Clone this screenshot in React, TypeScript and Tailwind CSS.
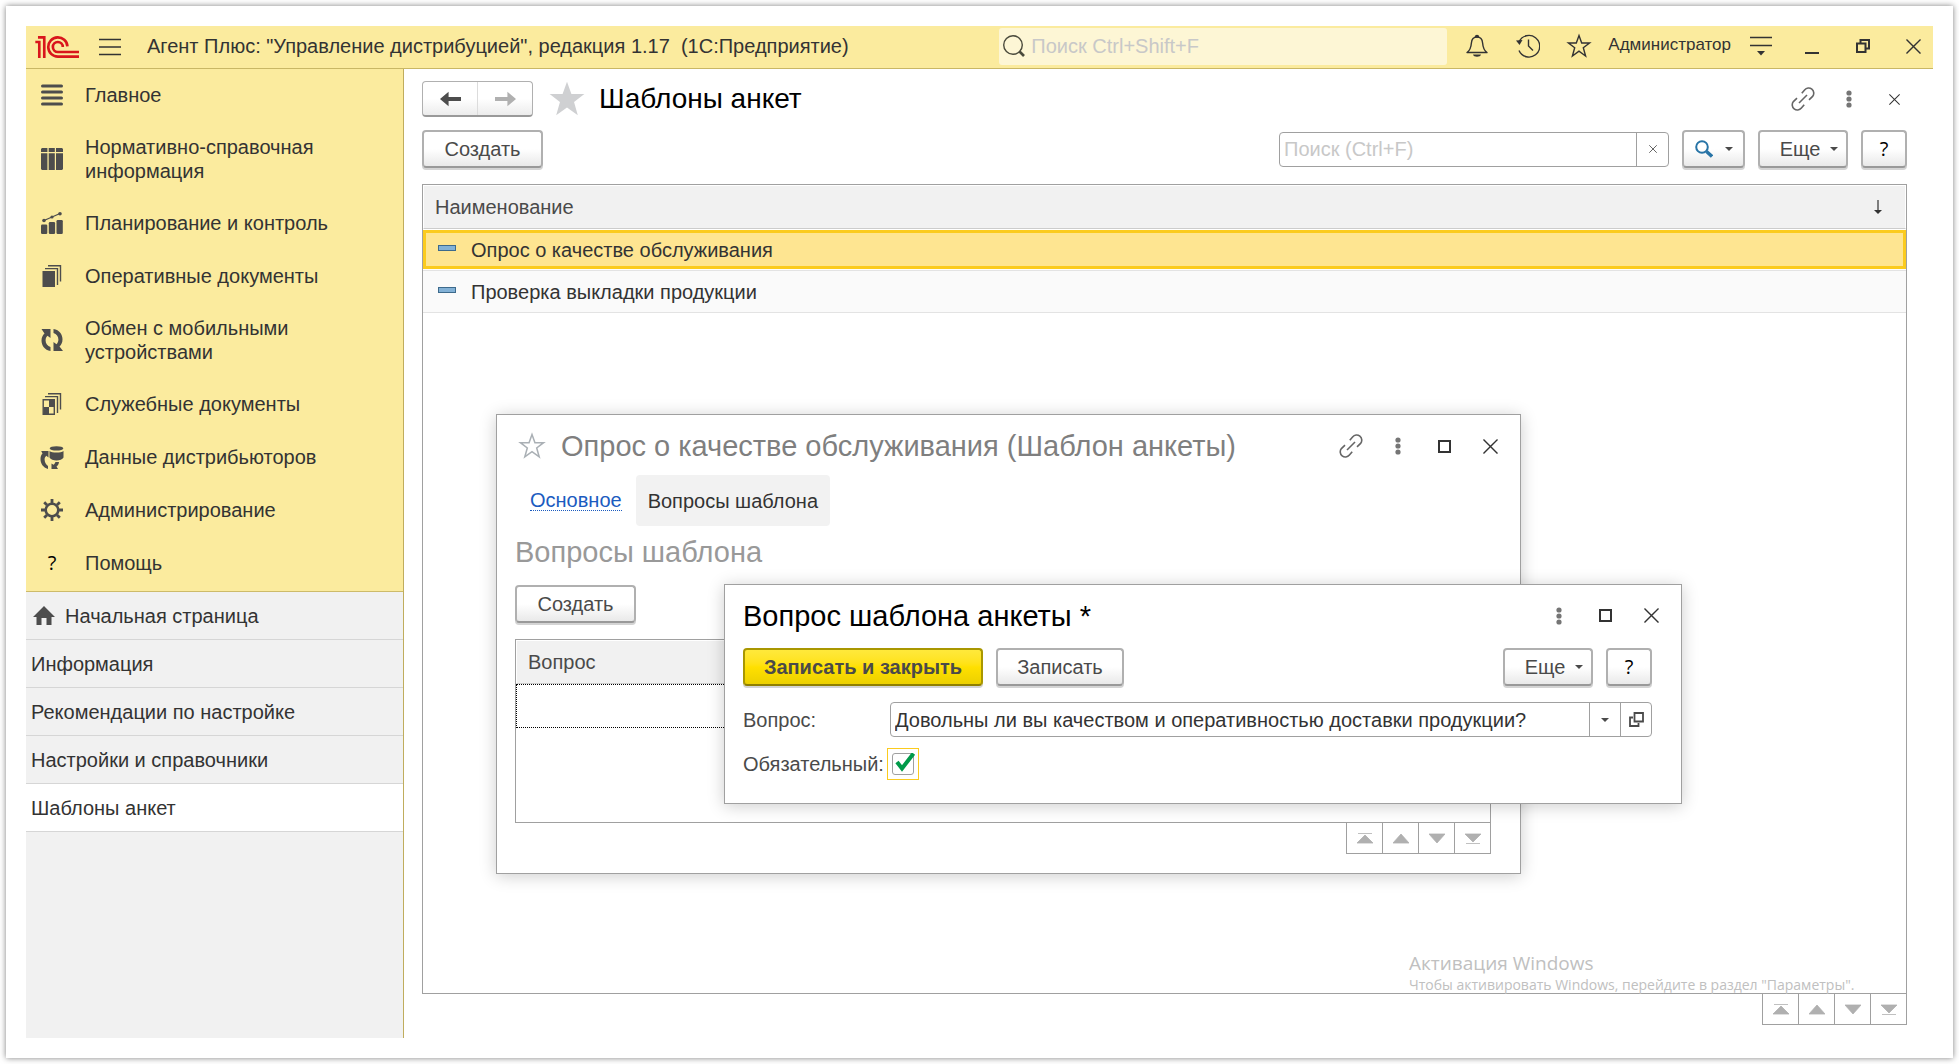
import React, { useState } from "react";
import clsx from "clsx";

interface IconT {
  className?: string;
}

/* ---------- icons ---------- */

const Logo1C = () => (
  <svg
    viewBox="0 0 133 66"
    className="h-[22px] w-11 shrink-0"
    fill="none"
    stroke="#d9161c"
    strokeWidth="8"
    aria-label="1C"
  >
    <path d="M1 18H13V66M9 4H28V66" />
    <path d="M98 31A29 29 0 1 0 69 62H133" />
    <path d="M84 33A15 15 0 1 0 69 48H133" />
  </svg>
);

const BurgerIcon = () => (
  <svg viewBox="0 0 22 18" className="h-[18px] w-[22px]" stroke="#333" strokeWidth="1.4">
    <path d="M0 1.5H22M0 9H22M0 16.5H22" />
  </svg>
);

const LoupeIcon = () => (
  <svg viewBox="0 0 22 22" className="h-[22px] w-[22px] shrink-0" fill="none" stroke="#4a4a3c">
    <circle cx="10" cy="10" r="9.3" strokeWidth="1.4" />
    <path d="M16.5 16.5L21 21" strokeWidth="2.6" />
  </svg>
);

const BellIcon = () => (
  <svg viewBox="0 0 22 24" className="h-6 w-[22px]" fill="none" stroke="#333" strokeWidth="1.4">
    <path
      d="M1 18.5C4 16.5 5 14 5.4 9C5.7 5 8 3 11 3C14 3 16.3 5 16.6 9C17 14 18 16.5 21 18.5Z"
      strokeLinejoin="round"
    />
    <path d="M9.5 3C9.5 1 12.5 1 12.5 3Z" fill="#333" />
    <path d="M7 20.5H15C14.5 23.5 7.5 23.5 7 20.5Z" fill="#333" stroke="none" />
  </svg>
);

const HistoryIcon = () => (
  <svg viewBox="0 0 24 24" className="h-6 w-6" fill="none" stroke="#333" strokeWidth="1.4">
    <path d="M3 8A10.8 10.8 0 1 1 3 16.5" />
    <path d="M12.5 5.5V12L17 16.5" />
    <path d="M0 6.5L6.5 6L3.5 11Z" fill="#333" stroke="none" />
  </svg>
);

const StarIcon: React.FC<IconT> = ({ className }) => (
  <svg viewBox="1 1 22 22" className={clsx("overflow-visible", className)} strokeWidth="1.4">
    <path d="M12 1.5L14.7 9H22.6L16.3 13.8L18.6 22L12 17.2L5.4 22L7.7 13.8L1.4 9H9.3Z" />
  </svg>
);

const MenuDownIcon = () => (
  <svg viewBox="0 0 22 20" className="h-5 w-[22px]" stroke="#333" strokeWidth="1.4">
    <path d="M0 1.5H22M0 9.5H22" />
    <path d="M7 15H15L11 19.5Z" fill="#333" stroke="none" />
  </svg>
);

const CloseIcon: React.FC<IconT> = ({ className }) => (
  <svg viewBox="0 0 16 16" className={className} stroke="#333" strokeWidth="1.5">
    <path d="M.5 .5L15.5 15.5M15.5 .5L.5 15.5" />
  </svg>
);

const RestoreIcon = () => (
  <svg viewBox="0 0 14 14" className="h-3.5 w-3.5" fill="none" stroke="#333" strokeWidth="2">
    <path d="M1 4.5H9.5V13H1ZM4.5 4.5V1H13V9.5H9.5" />
  </svg>
);

const SquareIcon = () => (
  <svg viewBox="0 0 13 13" className="h-[13px] w-[13px]" fill="none" stroke="#333" strokeWidth="2">
    <path d="M1 1H12V12H1Z" />
  </svg>
);

const LinkIcon = () => (
  <svg viewBox="0 0 24 24" className="h-6 w-6" fill="none" stroke="#666" strokeWidth="1.6">
    <path d="M10.8 6.2L13.6 2.9A5 5 0 0 1 21.6 9.4L18 12.8" />
    <path d="M13.2 17.8L10.4 21.1A5 5 0 0 1 2.4 14.6L6 11.2" />
    <path d="M8 16L16 8" />
  </svg>
);

const DotsIcon = () => (
  <svg viewBox="0 0 6 18" className="h-[18px] w-1.5" fill="#757575">
    <circle cx="3" cy="3" r="2.6" />
    <circle cx="3" cy="9" r="2.6" />
    <circle cx="3" cy="15" r="2.6" />
  </svg>
);

const Caret = () => (
  <svg viewBox="0 0 8 4" className="h-1 w-2" fill="#4a4a4a">
    <path d="M0 0H8L4 4Z" />
  </svg>
);

const BlueLoupe = () => (
  <svg viewBox="0 0 18 18" className="h-[18px] w-[18px]" fill="none" stroke="#2874a6">
    <circle cx="7" cy="7" r="5.8" strokeWidth="2" />
    <path d="M11.5 11.5L17 16.5" strokeWidth="3.4" />
  </svg>
);

const ArrowIcon: React.FC<IconT> = ({ className }) => (
  <svg viewBox="0 0 22 16" className={className}>
    <path d="M0 8L9 .5V6H22V10H9V15.5Z" />
  </svg>
);

const HomeIcon = () => (
  <svg viewBox="0 0 22 19" className="h-[19px] w-[22px]" fill="#4d4d4d">
    <path d="M11 0L22 11H18.5V19H13.5V12H8.5V19H3.5V11H0Z" />
  </svg>
);

const OpenIcon = () => (
  <svg viewBox="0 0 15 15" className="h-[15px] w-[15px]" fill="none" stroke="#4a4a4a" strokeWidth="1.8">
    <path d="M5.5 1H14V9.5H5.5Z" />
    <path d="M4 5.5H1V14H9.5V11" />
  </svg>
);

const ListIcon = () => (
  <svg viewBox="0 0 22 22" className="h-[22px] w-[22px]" stroke="#4d4d4d" strokeWidth="3" strokeLinecap="round">
    <path d="M1.5 2H20.5M1.5 8H20.5M1.5 14H20.5M1.5 20H20.5" />
  </svg>
);

const BindersIcon = () => (
  <svg viewBox="0 0 22 22" className="h-[22px] w-[22px]" fill="#4d4d4d">
    <path d="M1 0H6.4V4H0V1ZM7.7 0H13.8V4H7.7ZM15 0H21L22 1V4H15Z" />
    <path d="M0 5.3H6.4V22H1L0 21ZM7.7 5.3H13.8V22H7.7ZM15 5.3H22V21L21 22H15Z" />
  </svg>
);

const ChartIcon = () => (
  <svg viewBox="0 0 22 22" className="h-[22px] w-[22px]" fill="#4d4d4d">
    <rect x="0" y="12.5" width="6.3" height="9.5" rx="1.2" />
    <rect x="7.8" y="10" width="6.3" height="12" rx="1.2" />
    <rect x="15.5" y="8" width="6.3" height="14" rx="1.2" />
    <path d="M3 8.5L11 5L19 1.5" stroke="#4d4d4d" strokeWidth="1.3" />
    <circle cx="3" cy="8.5" r="1.8" />
    <circle cx="11" cy="5" r="1.6" />
    <circle cx="19" cy="1.8" r="1.8" />
  </svg>
);

const DocsIcon = () => (
  <svg viewBox="0 0 22 22" className="h-[22px] w-[22px]" fill="#4d4d4d">
    <rect x="1.5" y="6" width="12.5" height="16" />
    <path d="M4 3.6H16.5V20M7 .8H19.5V16.5" fill="none" stroke="#4d4d4d" strokeWidth="1.4" />
  </svg>
);

const SyncIcon = () => (
  <svg viewBox="0 0 22 22" className="h-[22px] w-[22px]" fill="#4d4d4d">
    <path d="M9.5 22C3.5 21 .5 16.5 .5 11.5C.5 8.5 1.8 6 3.5 4.5L.5 0H9.5V9L6.5 6.8C5.2 8 4.6 9.6 4.6 11.5C4.6 14.5 6.5 17 9.5 18Z" />
    <path d="M12.5 0C18.5 1 21.5 5.5 21.5 10.5C21.5 13.5 20.2 16 18.5 17.5L22 22H12.5V13L15.5 15.2C16.8 14 17.4 12.4 17.4 10.5C17.4 7.5 15.5 5 12.5 4Z" />
  </svg>
);

const ServiceDocsIcon = () => (
  <svg viewBox="0 0 22 22" className="h-[22px] w-[22px]" fill="none" stroke="#4d4d4d" strokeWidth="1.4">
    <path d="M2.2 6.7H13.3V21.3H2.2Z" />
    <path d="M8 7H13V14H8ZM2.5 14H8V21H2.5Z" fill="#4d4d4d" stroke="none" />
    <path d="M4 3.6H16.5V20M7 .8H19.5V16.5" />
  </svg>
);

const DataIcon = () => (
  <svg viewBox="0 0 24 23" className="h-[23px] w-6 shrink-0" fill="#4d4d4d">
    <path d="M8 23C3 21.5 .5 17.5 .5 13C.5 10.5 1.3 8.7 2.5 7.5L1.2 5H8.5V11.5L6.3 9.8C5 11 4.6 12 4.6 13.5C4.6 16.5 6 18.5 8 20Z" />
    <ellipse cx="16.5" cy="2.4" rx="6.8" ry="2.2" />
    <path d="M9.5 5C12 7 21 7 23.5 5V11.5C21.5 15.5 11.5 15.5 9.5 11.5Z" />
    <path d="M15.5 16H19C18.8 18 17.8 19.6 16.5 20.5L18 23H11.5V17.5L13.5 18.8C14.5 18 15 17.2 15.5 16Z" />
  </svg>
);

const GearIcon = () => (
  <svg viewBox="0 0 22 22" className="h-[22px] w-[22px]" fill="none" stroke="#4d4d4d">
    <circle cx="11" cy="11" r="6.3" strokeWidth="2.6" />
    <path
      d="M11 0V4M11 18V22M0 11H4M18 11H22M3.2 3.2L6 6M16 16L18.8 18.8M18.8 3.2L16 6M6 16L3.2 18.8"
      strokeWidth="2.8"
    />
  </svg>
);

const HelpIcon = () => (
  <span className="font-['Open_Sans',sans-serif] text-xl leading-6 font-medium text-black">?</span>
);

/* ---------- data ---------- */

const sections = [
  { title: "Главное", Icon: ListIcon },
  { title: "Нормативно-справочная информация", Icon: BindersIcon },
  { title: "Планирование и контроль", Icon: ChartIcon },
  { title: "Оперативные документы", Icon: DocsIcon },
  { title: "Обмен с мобильными устройствами", Icon: SyncIcon },
  { title: "Служебные документы", Icon: ServiceDocsIcon },
  { title: "Данные дистрибьюторов", Icon: DataIcon },
  { title: "Администрирование", Icon: GearIcon },
  { title: "Помощь", Icon: HelpIcon },
];

const openPages = [
  "Начальная страница",
  "Информация",
  "Рекомендации по настройке",
  "Настройки и справочники",
  "Шаблоны анкет",
];

const templates = ["Опрос о качестве обслуживания", "Проверка выкладки продукции"];

/* ---------- shared controls ---------- */

interface ButtonT extends React.ButtonHTMLAttributes<HTMLButtonElement> {
  primary?: boolean;
}

const Button: React.FC<ButtonT> = ({ primary, className, ...props }) => (
  <button
    type="button"
    className={clsx(
      "flex h-[38px] shrink-0 items-center justify-center rounded-[4px] border-2 bg-linear-to-b leading-6 whitespace-nowrap text-[#4a4a4a] shadow-[0_2px_0_#d4d4d4]",
      primary
        ? "border-[#a99700] border-b-[#8f7f00] from-[#ffe93b] via-[#ffe000] to-[#ecd000] font-bold"
        : "border-[#b0b0b0] border-b-[#999] from-white from-50% to-[#e9e9e9]",
      className
    )}
    {...props}
  />
);

const MoreButton = () => (
  <Button className="w-[90px] gap-2.5 pl-3">
    Еще
    <Caret />
  </Button>
);

const HelpButton = () => (
  <Button className="w-[46px]" aria-label="Справка">
    <HelpIcon />
  </Button>
);

const IconButton: React.FC<React.ButtonHTMLAttributes<HTMLButtonElement>> = ({
  className,
  ...props
}) => (
  <button
    type="button"
    className={clsx("flex shrink-0 items-center justify-center", className)}
    {...props}
  />
);

const pagerShapes = [
  { label: "В начало", d: "M8 2L16 10H0ZM1 .5H15" },
  { label: "Вверх", d: "M8 1L16 10H0Z" },
  { label: "Вниз", d: "M0 1H16L8 10Z" },
  { label: "В конец", d: "M0 1H16L8 9ZM1 10.5H15" },
];

const Pager = () => (
  <div className="-mt-px flex self-end border-l border-[#a0a0a0]">
    {pagerShapes.map(({ label, d }) => (
      <button
        key={label}
        type="button"
        aria-label={label}
        className="flex h-8 w-9 items-center justify-center border-y border-r border-[#a0a0a0]"
      >
        <svg viewBox="0 0 16 11" className="h-[11px] w-4" fill="#b0b0b0" stroke="#b0b0b0" strokeWidth=".8">
          <path d={d} />
        </svg>
      </button>
    ))}
  </div>
);

/* ---------- page parts ---------- */

const TopBar = () => (
  <header className="flex h-[43px] items-center border-b border-[#c9b765] bg-[#fbeb9e] pl-[9px]">
    <Logo1C />
    <IconButton aria-label="Меню" className="ml-5">
      <BurgerIcon />
    </IconButton>
    <div className="ml-[26px] min-w-0 flex-1 truncate pb-0.5 whitespace-pre">
      {'Агент Плюс: "Управление дистрибуцией", редакция 1.17  (1С:Предприятие)'}
    </div>
    <label className="mb-0.5 flex h-[37px] w-[448px] items-center gap-1.5 rounded-[3px] bg-[#fdf6d5] px-1">
      <LoupeIcon />
      <input
        aria-label="Поиск"
        placeholder="Поиск Ctrl+Shift+F"
        className="min-w-0 flex-1 bg-transparent outline-none placeholder:text-[#c8c8c8]"
      />
    </label>
    <div className="ml-1 flex items-center pb-0.5">
      <IconButton aria-label="Уведомления" className="w-[51px]">
        <BellIcon />
      </IconButton>
      <IconButton aria-label="История" className="w-[51px]">
        <HistoryIcon />
      </IconButton>
      <IconButton aria-label="Избранное" className="w-[51px]">
        <StarIcon className="h-[22px] w-[22px] fill-none stroke-[#333]" />
      </IconButton>
      <button type="button" className="px-1 pb-0.5 text-[17px] leading-6">
        Администратор
      </button>
      <IconButton aria-label="Настройки" className="w-[51px]">
        <MenuDownIcon />
      </IconButton>
      <IconButton aria-label="Свернуть" className="h-6 w-[51px] items-end pb-1">
        <span className="h-0.5 w-3.5 bg-[#333]" />
      </IconButton>
      <IconButton aria-label="Восстановить" className="w-[51px]">
        <RestoreIcon />
      </IconButton>
      <IconButton aria-label="Закрыть" className="w-[45px] justify-end pr-3">
        <CloseIcon className="h-[15px] w-[15px]" />
      </IconButton>
    </div>
  </header>
);

const Sidebar = () => (
  <aside className="flex w-[378px] shrink-0 flex-col border-r border-[#c0ad5d] bg-[#f1f1f1]">
    <nav className="border-b border-[#cdbb6a] bg-[#fbeb9e] pb-px">
      {sections.map(({ title, Icon }) => (
        <a
          key={title}
          href="#"
          className="flex min-h-[53px] items-center gap-[22px] pt-[13px] pr-16 pb-3.5 pl-[15px] leading-6"
        >
          <span className="flex w-[22px] shrink-0 justify-center">
            <Icon />
          </span>
          {title}
        </a>
      ))}
    </nav>
    <nav>
      {openPages.map((page, i) => (
        <a
          key={page}
          href="#"
          className={clsx(
            "flex h-12 items-center gap-2.5 border-b border-[#d6d6d6]",
            i === 0 ? "pl-[7px]" : "pl-[5px]",
            i === openPages.length - 1 && "bg-white"
          )}
        >
          {i === 0 && <HomeIcon />}
          {page}
        </a>
      ))}
    </nav>
  </aside>
);

const TemplateList = () => (
  <>
    <div className="flex items-center pt-3 pr-4">
      <div className="flex h-9 w-[111px] overflow-hidden rounded-[4px] border border-[#b0b0b0] border-b-2 border-b-[#999] bg-linear-to-b from-white from-50% to-[#ececec]">
        <IconButton aria-label="Назад" className="flex-1 border-r border-[#dcdcdc]">
          <ArrowIcon className="h-4 w-[21px] fill-[#4d4d4d]" />
        </IconButton>
        <IconButton aria-label="Вперед" className="flex-1">
          <ArrowIcon className="h-4 w-[21px] rotate-180 fill-[#b0b0b0]" />
        </IconButton>
      </div>
      <IconButton aria-label="В избранное" className="ml-4">
        <StarIcon className="h-9 w-9 fill-[#cfd0d2]" />
      </IconButton>
      <h1 className="ml-3.5 flex-1 text-[28px] leading-9 text-black">Шаблоны анкет</h1>
      <IconButton aria-label="Ссылка" className="w-12">
        <LinkIcon />
      </IconButton>
      <IconButton aria-label="Ещё действия" className="w-11">
        <DotsIcon />
      </IconButton>
      <IconButton aria-label="Закрыть" className="w-[46px]">
        <CloseIcon className="h-[11px] w-[11px]" />
      </IconButton>
    </div>

    <div className="mt-[13px] mr-[26px] flex items-center gap-[13px]">
      <Button className="mr-auto w-[121px]">Создать</Button>
      <div className="flex h-[35px] w-[390px] rounded-[4px] border border-[#a0a0a0]">
        <input
          aria-label="Поиск по списку"
          placeholder="Поиск (Ctrl+F)"
          className="min-w-0 flex-1 bg-transparent px-1 outline-none placeholder:text-[#c8c8c8]"
        />
        <IconButton aria-label="Очистить" className="w-8 border-l border-[#a0a0a0]">
          <CloseIcon className="h-2 w-2" />
        </IconButton>
      </div>
      <Button className="w-[63px] gap-3" aria-label="Найти">
        <BlueLoupe />
        <Caret />
      </Button>
      <MoreButton />
      <HelpButton />
    </div>

    <div className="mt-4 mr-[26px] mb-[13px] flex flex-1 flex-col">
      <div className="flex-1 border border-[#a0a0a0]">
        <table className="w-full border-separate border-spacing-0 text-left">
          <thead>
            <tr>
              <th className="h-11 border border-white border-b-[#ccc] bg-[#f1f1f1] bg-clip-padding px-[11px] font-normal text-[#4a4a4a]">
                <div className="flex items-center justify-between pr-3">
                  Наименование
                  <svg viewBox="0 0 8 14" className="h-3.5 w-2" fill="#333">
                    <path d="M3.4 0H4.6V10H8L4 14L0 10H3.4Z" />
                  </svg>
                </div>
              </th>
            </tr>
          </thead>
          <tbody>
            {templates.map((name, i) => (
              <tr key={name}>
                <td
                  className={clsx(
                    "h-[42px] border-b border-[#e3e3e3] p-0",
                    i > 0 && "bg-[#fafafa]"
                  )}
                >
                  <div
                    className={clsx(
                      "flex h-[39px] items-center gap-[15px] border-3 px-3",
                      i === 0 ? "border-[#fbcb1e] bg-[#fee591]" : "border-transparent"
                    )}
                  >
                    <span className="mb-1 h-1.5 w-[18px] border border-[#3d6a8c] bg-[#82b1d6]" />
                    {name}
                  </div>
                </td>
              </tr>
            ))}
          </tbody>
        </table>
      </div>
      <Pager />
    </div>
  </>
);

const windowClass =
  "absolute flex flex-col border border-[#a0a0a0] bg-white shadow-[0_2px_16px_rgba(0,0,0,0.2)]";

const TemplateWindow = () => (
  <section className={clsx(windowClass, "top-[345px] left-[92px] h-[460px] w-[1025px] pl-[18px]")}>
    <div className="flex h-[60px] items-center pt-0.5">
      <IconButton aria-label="В избранное" className="ml-[5px]">
        <StarIcon className="h-6 w-6 fill-none stroke-[#aab0b5]" />
      </IconButton>
      <h2 className="ml-[17px] flex-1 text-[29px] leading-9 text-[#7f7f7f]">
        Опрос о качестве обслуживания (Шаблон анкеты)
      </h2>
      <IconButton aria-label="Ссылка" className="w-12">
        <LinkIcon />
      </IconButton>
      <IconButton aria-label="Ещё действия" className="w-[46px]">
        <DotsIcon />
      </IconButton>
      <IconButton aria-label="Развернуть" className="w-[46px]">
        <SquareIcon />
      </IconButton>
      <IconButton aria-label="Закрыть" className="mr-[7px] w-[46px]">
        <CloseIcon className="h-[15px] w-[15px]" />
      </IconButton>
    </div>
    <nav className="flex items-center gap-3.5 pl-[15px]">
      <a href="#" className="border-b border-dotted border-[#1b5bbf] leading-5 text-[#1b5bbf]">
        Основное
      </a>
      <a href="#" className="flex h-[51px] items-center rounded-[4px] bg-[#f2f2f2] px-3">
        Вопросы шаблона
      </a>
    </nav>
    <h3 className="mt-2 text-[29px] leading-9 text-[#999]">Вопросы шаблона</h3>
    <Button className="mt-[15px] w-[121px]">Создать</Button>
    <div className="mt-4 mr-[29px] flex flex-col">
      <div className="h-[184px] border border-[#a0a0a0]">
        <table className="w-full border-separate border-spacing-0 text-left">
          <thead>
            <tr>
              <th className="h-11 border border-white border-b-[#ccc] bg-[#f1f1f1] bg-clip-padding px-[11px] font-normal text-[#4a4a4a]">
                Вопрос
              </th>
            </tr>
          </thead>
          <tbody>
            <tr>
              <td className="h-11 border border-dotted border-black" />
            </tr>
          </tbody>
        </table>
      </div>
      <Pager />
    </div>
  </section>
);

const QuestionWindow = () => {
  const [question, setQuestion] = useState(
    "Довольны ли вы качеством и оперативностью доставки продукции?"
  );
  const [required, setRequired] = useState(true);

  return (
    <section className={clsx(windowClass, "top-[515px] left-[320px] h-[220px] w-[958px] pl-[18px]")}>
      <div className="flex h-[63px] items-center pb-0.5">
        <h2 className="flex-1 text-[29px] leading-9 text-black">Вопрос шаблона анкеты *</h2>
        <IconButton aria-label="Ещё действия" className="w-[46px]">
          <DotsIcon />
        </IconButton>
        <IconButton aria-label="Развернуть" className="w-[46px]">
          <SquareIcon />
        </IconButton>
        <IconButton aria-label="Закрыть" className="mr-[7px] w-[46px]">
          <CloseIcon className="h-[15px] w-[15px]" />
        </IconButton>
      </div>
      <div className="mr-[29px] flex gap-[13px]">
        <Button primary className="w-60">
          Записать и закрыть
        </Button>
        <Button className="mr-auto w-32">Записать</Button>
        <MoreButton />
        <HelpButton />
      </div>
      <div className="mt-4 mr-[29px] flex items-center">
        <label htmlFor="question" className="w-[147px] text-[#4a4a4a]">
          Вопрос:
        </label>
        <div className="flex h-[35px] flex-1 rounded-[4px] border border-[#a0a0a0]">
          <input
            id="question"
            value={question}
            onChange={(e) => setQuestion(e.target.value)}
            className="min-w-0 flex-1 bg-transparent px-1 outline-none"
          />
          <IconButton aria-label="Выбрать" className="w-[31px] border-l border-[#a0a0a0]">
            <Caret />
          </IconButton>
          <IconButton aria-label="Открыть" className="w-[31px] border-l border-[#a0a0a0]">
            <OpenIcon />
          </IconButton>
        </div>
      </div>
      <div className="mt-[11px] flex items-center">
        <label htmlFor="required" className="w-36 text-[#4a4a4a]">
          Обязательный:
        </label>
        <span className="relative flex h-8 w-8 items-center justify-center border border-[#fbcb1e]">
          <input
            id="required"
            type="checkbox"
            checked={required}
            onChange={(e) => setRequired(e.target.checked)}
            className="peer h-[22px] w-[22px] appearance-none rounded-[3px] border border-[#a0a0a0]"
          />
          <svg
            viewBox="0 0 22 22"
            className="pointer-events-none absolute top-1 left-1.5 hidden h-[22px] w-[22px] peer-checked:block"
            fill="none"
            stroke="#009a49"
            strokeWidth="4"
          >
            <path d="M3 9L8 15.5L19.5 .5" />
          </svg>
        </span>
      </div>
    </section>
  );
};

const App = () => {
  return (
    <div className="flex min-h-screen bg-white p-1.5 font-['Liberation_Sans',Arial,sans-serif] text-xl leading-6 text-[#333]">
      <div className="flex min-w-0 flex-1 flex-col bg-white p-5 shadow-[0_0_6px_rgba(0,0,0,0.5)]">
        <TopBar />
        <div className="flex flex-1">
          <Sidebar />
          <main className="relative flex min-w-0 flex-1 flex-col pl-[18px]">
            <TemplateList />
            <TemplateWindow />
            <QuestionWindow />
            <div className="pointer-events-none absolute right-[70px] bottom-[43px] w-[454px] font-['Open_Sans',sans-serif] whitespace-nowrap text-[#c0c0c0]">
              <p className="text-[19px] leading-6">Активация Windows</p>
              <p className="text-sm leading-5">
                Чтобы активировать Windows, перейдите в раздел "Параметры".
              </p>
            </div>
          </main>
        </div>
      </div>
    </div>
  );
};

export default App;
